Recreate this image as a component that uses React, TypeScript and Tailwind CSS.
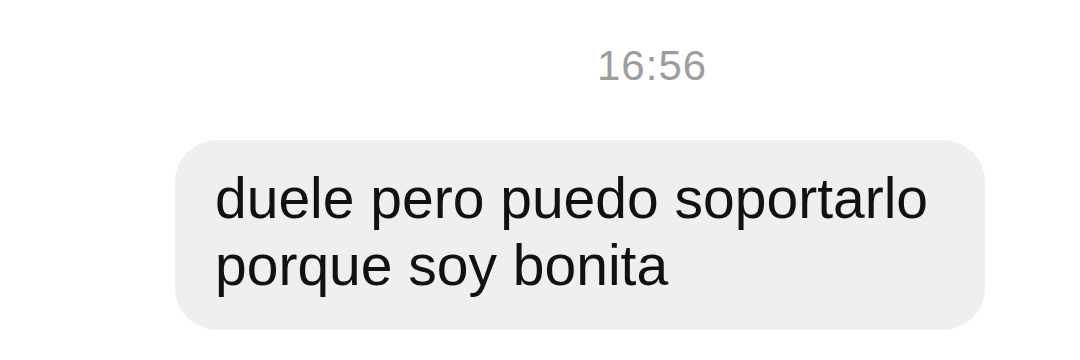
export default function App() {
  return (
    <div className="w-[1080px] h-[360px] bg-white overflow-hidden" style={{ fontFamily: '"Liberation Sans", Arial, sans-serif' }}>
      <div className="pt-[42px] pl-[597px]">
        <div className="text-[42px] leading-[48px] text-[#9d9d9d] tracking-[1px]">16:56</div>
      </div>
      <div className="mt-[50px] ml-[175px] w-[810px] rounded-[42px] bg-[#efefef] pl-[40px] pt-[25px] pb-[31px]">
        <p className="text-[57px] leading-[67px] text-[#111111]">
          duele pero puedo soportarlo
          <br />
          porque soy bonita
        </p>
      </div>
    </div>
  );
}
